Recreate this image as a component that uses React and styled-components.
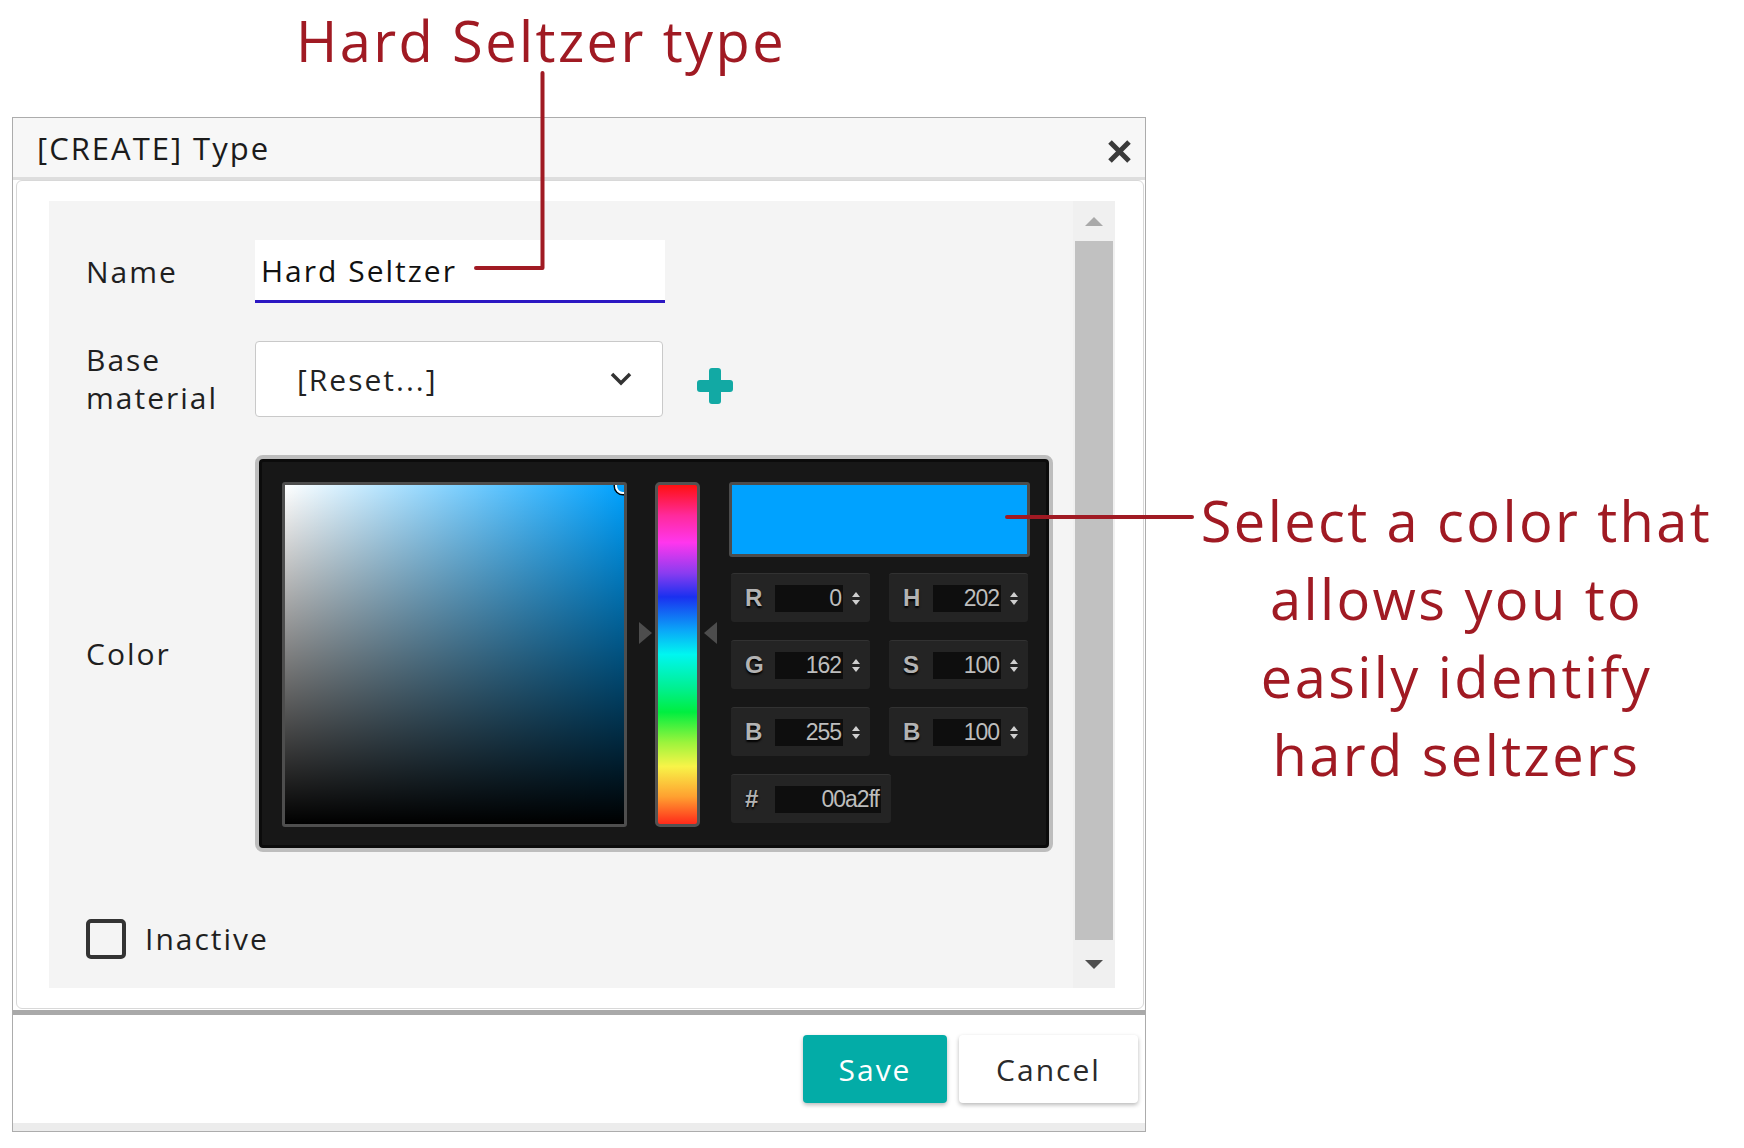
import React from 'react'
import styled, { createGlobalStyle } from 'styled-components'

const RED = '#a01a23'
const TEAL = '#03aca7'

const GlobalStyle = createGlobalStyle`
  html, body {
    margin: 0;
    padding: 0;
    background: #fff;
  }
  body {
    font-family: 'Open Sans', 'Liberation Sans', sans-serif;
    color: #1d1d1d;
  }
  * {
    box-sizing: border-box;
  }
`

const Page = styled.div`
  position: relative;
  width: 1744px;
  height: 1148px;
  overflow: hidden;
  padding-left: 12px;
`

const Heading = styled.h1`
  margin: 0;
  height: 117px;
  padding: 12px 0 0 284px;
  font-size: 56px;
  line-height: 56px;
  font-weight: 400;
  letter-spacing: 2.4px;
  color: ${RED};
  white-space: nowrap;
`

const Stage = styled.div`
  display: flex;
  align-items: flex-start;
`

const Dialog = styled.section`
  flex-shrink: 0;
  width: 1134px;
  height: 1015px;
  border: 1px solid #acacac;
  background: #fff;
  display: flex;
  flex-direction: column;
`

const DialogHeader = styled.header`
  flex-shrink: 0;
  height: 62px;
  background: #f7f7f7;
  border-bottom: 3px solid #dedede;
  display: flex;
  align-items: center;
  justify-content: space-between;
  padding: 0 13px 0 24px;
`

const DialogTitle = styled.h2`
  margin: 0;
  font-size: 31px;
  font-weight: 400;
  letter-spacing: 2px;
  color: #1b1b1b;
`

const CloseButton = styled.button`
  border: 0;
  background: none;
  padding: 0;
  margin-top: 8px;
  width: 25px;
  height: 25px;
  display: flex;
  color: #3a3a3a;
  cursor: pointer;
  svg {
    filter: blur(0.6px);
  }
`

const Card = styled.div`
  flex-shrink: 0;
  height: 829px;
  margin: 0 1px 1px 3px;
  border: 1px solid #d8d8d8;
  border-radius: 6px;
  padding: 20px 28px 20px 32px;
  display: flex;
`

const Panel = styled.div`
  flex: 1;
  background: #f4f4f4;
  padding: 39px 19px 30px 37px;
`

const Scrollbar = styled.div`
  width: 42px;
  background: #f0f0f0;
  display: flex;
  flex-direction: column;
  align-items: center;
`

const ScrollArrow = styled.div`
  height: ${p => p.$h}px;
  display: flex;
  align-items: center;
  justify-content: center;
  &::before {
    content: '';
    border-left: 9px solid transparent;
    border-right: 9px solid transparent;
    ${p => (p.$down ? 'border-top' : 'border-bottom')}: 9px solid ${p => p.$color};
  }
`

const ScrollThumb = styled.div`
  flex: 1;
  width: 38px;
  background: #c1c1c1;
`

const FormRow = styled.div`
  display: flex;
  align-items: center;
  margin-top: ${p => p.$gap || 0}px;
`

const Label = styled.label`
  width: 169px;
  flex-shrink: 0;
  font-size: 30px;
  line-height: 38px;
  letter-spacing: 2px;
  color: #1f1f1f;
`

const NameInput = styled.input`
  width: 410px;
  height: 63px;
  border: 0;
  border-bottom: 3px solid #2b17c2;
  background: #fff;
  padding: 0 6px;
  font-family: inherit;
  font-size: 30px;
  letter-spacing: 2px;
  color: #111;
  outline: none;
`

const Select = styled.div`
  width: 408px;
  height: 76px;
  background: #fff;
  border: 1px solid #c9c9c9;
  border-radius: 4px;
  padding: 0 30px 0 41px;
  display: flex;
  align-items: center;
  justify-content: space-between;
  font-size: 30px;
  letter-spacing: 2px;
  color: #222;
`

const AddButton = styled.button`
  border: 0;
  background: none;
  padding: 0;
  margin: 14px 0 0 34px;
  width: 36px;
  height: 36px;
  display: flex;
  color: #12a9a4;
  cursor: pointer;
`

const Picker = styled.div`
  width: 798px;
  height: 397px;
  border: 4px solid #bdbdbd;
  border-radius: 8px;
  background: #171717;
  box-shadow: inset 0 0 0 3px #0b0b0b;
  display: flex;
  align-items: flex-start;
  padding: 23px 19px 21px 23px;
  font-family: 'Liberation Sans', Arial, sans-serif;
`

const SVBox = styled.div`
  position: relative;
  flex-shrink: 0;
  width: 345px;
  height: 345px;
  border: 3px solid #4e4e4e;
  border-radius: 3px;
  overflow: hidden;
  background:
    linear-gradient(to top, #000 0%, rgba(0, 0, 0, 0) 100%),
    linear-gradient(to right, #fff 0%, #00a2ff 100%);
`

const SVCursor = styled.span`
  position: absolute;
  top: -7px;
  right: -7px;
  width: 16px;
  height: 16px;
  border-radius: 50%;
  border: 2px solid #fff;
  box-shadow: 0 0 0 1.5px #000;
`

const HueTrack = styled.div`
  position: relative;
  flex-shrink: 0;
  width: 45px;
  height: 345px;
  margin: 0 29px 0 28px;
`

const HueBar = styled.div`
  height: 100%;
  border: 3px solid #525252;
  border-radius: 5px;
  background: linear-gradient(
    to bottom,
    #ff1010 0%,
    #ff2a9c 9%,
    #ff36ee 17%,
    #8a3cf0 26%,
    #1a30f0 33%,
    #0aa8f8 43%,
    #00f6f0 50%,
    #00f090 60%,
    #00ee40 67%,
    #9cf43c 76%,
    #f8f448 83%,
    #ffa030 92%,
    #ff2a1a 100%
  );
`

const HueArrow = styled.span`
  position: absolute;
  top: 140px;
  ${p => (p.$side === 'left' ? 'left: -16px;' : 'right: -17px;')}
  width: 0;
  height: 0;
  border-top: 11px solid transparent;
  border-bottom: 11px solid transparent;
  ${p => (p.$side === 'left' ? 'border-left' : 'border-right')}: 13px solid #4d4d4d;
`

const SideColumn = styled.div`
  width: 301px;
  flex-shrink: 0;
`

const Preview = styled.div`
  height: 75px;
  border: 3px solid #4c4c4c;
  border-radius: 3px;
  background: ${p => p.$color};
`

const FieldGrid = styled.div`
  margin-top: 16px;
  padding-left: 2px;
  display: grid;
  grid-template-columns: 139px 139px;
  grid-auto-rows: 49px;
  column-gap: 19px;
  row-gap: 18px;
`

const Field = styled.div`
  width: ${p => (p.$wide ? '160px' : '139px')};
  background: #242424;
  border-top: 1px solid #323232;
  border-radius: 3px;
  display: flex;
  align-items: center;
  padding-left: 14px;
`

const FieldLetter = styled.span`
  width: 17px;
  font-size: 24px;
  font-weight: 700;
  color: #b3b3b3;
  text-shadow: 0 2px 2px #000;
`

const FieldValue = styled.span`
  width: ${p => (p.$wide ? '106px' : '68px')};
  height: 27px;
  margin-left: 13px;
  background: #0e0e0e;
  padding-right: 2px;
  text-align: right;
  font-size: 23px;
  line-height: 27px;
  letter-spacing: -1px;
  color: #bdbdbd;
`

const Spinner = styled.span`
  margin-left: 9px;
  display: flex;
  flex-direction: column;
  gap: 3px;
  &::before,
  &::after {
    content: '';
    border-left: 4px solid transparent;
    border-right: 4px solid transparent;
  }
  &::before {
    border-bottom: 5px solid #cfcfcf;
  }
  &::after {
    border-top: 5px solid #cfcfcf;
  }
`

const CheckRow = styled.label`
  display: flex;
  align-items: center;
  margin-top: 66px;
  font-size: 30px;
  letter-spacing: 2px;
  color: #1f1f1f;
`

const CheckBox = styled.span`
  width: 40px;
  height: 40px;
  border: 4px solid #333;
  border-radius: 5px;
  margin-right: 19px;
`

const Footer = styled.footer`
  flex: 1;
  border-top: 5px solid #a9a9a9;
  display: flex;
  flex-direction: column;
`

const ButtonBar = styled.div`
  height: 108px;
  display: flex;
  justify-content: flex-end;
  align-items: flex-start;
  gap: 12px;
  padding: 20px 7px 0 0;
`

const Button = styled.button`
  width: ${p => p.$w}px;
  height: 68px;
  border: 0;
  border-radius: 4px;
  font-family: inherit;
  font-size: 30px;
  letter-spacing: 2px;
  cursor: pointer;
  background: ${p => (p.$primary ? TEAL : '#fff')};
  color: ${p => (p.$primary ? '#fff' : '#2a2a2a')};
  box-shadow: 0 2px 4px rgba(0, 0, 0, 0.28);
`

const FooterStrip = styled.div`
  flex: 1;
  background: #ececec;
`

const Callout = styled.p`
  flex: 1;
  margin: 0;
  padding: 364px 0 0 23px;
  text-align: center;
  font-size: 56px;
  line-height: 78px;
  letter-spacing: 2.4px;
  color: ${RED};
  span {
    display: block;
    white-space: nowrap;
  }
`

const Connectors = styled.svg`
  position: absolute;
  top: 0;
  left: 0;
  pointer-events: none;
`

const rgbFields = [
  ['R', '0'],
  ['H', '202'],
  ['G', '162'],
  ['S', '100'],
  ['B', '255'],
  ['B', '100'],
]

function ColorPicker({ hex }) {
  return (
    <Picker>
      <SVBox>
        <SVCursor />
      </SVBox>
      <HueTrack>
        <HueBar />
        <HueArrow $side="left" />
        <HueArrow $side="right" />
      </HueTrack>
      <SideColumn>
        <Preview $color={'#' + hex} />
        <FieldGrid>
          {rgbFields.map(([letter, value], i) => (
            <Field key={i}>
              <FieldLetter>{letter}</FieldLetter>
              <FieldValue>{value}</FieldValue>
              <Spinner />
            </Field>
          ))}
          <Field $wide>
            <FieldLetter>#</FieldLetter>
            <FieldValue $wide>{hex}</FieldValue>
          </Field>
        </FieldGrid>
      </SideColumn>
    </Picker>
  )
}

export default function App() {
  return (
    <Page>
      <GlobalStyle />
      <Heading>Hard Seltzer type</Heading>
      <Stage>
        <Dialog>
          <DialogHeader>
            <DialogTitle>[CREATE] Type</DialogTitle>
            <CloseButton aria-label="Close">
              <svg width="25" height="25" viewBox="0 0 25 25">
                <path d="M3 3 L22 22 M22 3 L3 22" stroke="currentColor" strokeWidth="5" />
              </svg>
            </CloseButton>
          </DialogHeader>
          <Card>
            <Panel>
              <FormRow>
                <Label>Name</Label>
                <NameInput defaultValue="Hard Seltzer" />
              </FormRow>
              <FormRow $gap={38}>
                <Label>Base material</Label>
                <Select>
                  <span>[Reset...]</span>
                  <svg width="22" height="14" viewBox="0 0 22 14">
                    <path d="M2 2 L11 11 L20 2" fill="none" stroke="#333" strokeWidth="3.5" />
                  </svg>
                </Select>
                <AddButton aria-label="Add">
                  <svg width="36" height="36" viewBox="0 0 36 36" fill="currentColor">
                    <rect x="12" y="0" width="12" height="36" rx="3" />
                    <rect x="0" y="12" width="36" height="12" rx="3" />
                  </svg>
                </AddButton>
              </FormRow>
              <FormRow $gap={38}>
                <Label>Color</Label>
                <ColorPicker hex="00a2ff" />
              </FormRow>
              <CheckRow>
                <CheckBox />
                Inactive
              </CheckRow>
            </Panel>
            <Scrollbar>
              <ScrollArrow $h={40} $color="#a9a9a9" />
              <ScrollThumb />
              <ScrollArrow $h={48} $color="#4f4f4f" $down />
            </Scrollbar>
          </Card>
          <Footer>
            <ButtonBar>
              <Button $primary $w={144}>Save</Button>
              <Button $w={179}>Cancel</Button>
            </ButtonBar>
            <FooterStrip />
          </Footer>
        </Dialog>
        <Callout>
          <span>Select a color that</span>
          <span>allows you to</span>
          <span>easily identify</span>
          <span>hard seltzers</span>
        </Callout>
      </Stage>
      <Connectors width="1744" height="1148" viewBox="0 0 1744 1148">
        <path d="M542.5 73 V268 H476" fill="none" stroke={RED} strokeWidth="4" strokeLinecap="round" strokeLinejoin="round" />
        <path d="M1007 517 H1192" fill="none" stroke={RED} strokeWidth="4" strokeLinecap="round" />
      </Connectors>
    </Page>
  )
}
